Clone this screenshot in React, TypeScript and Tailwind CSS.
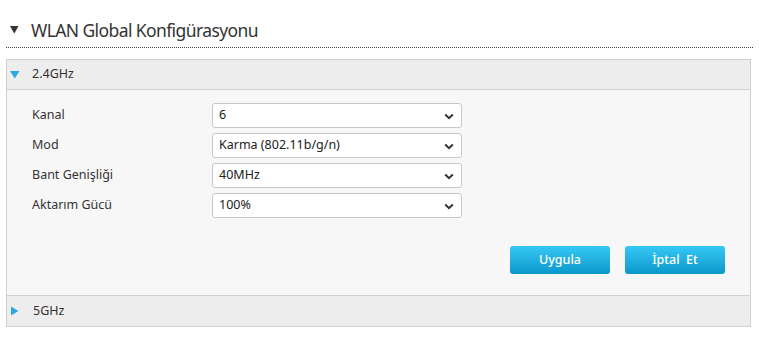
import React from "react";

const font = { fontFamily: '"Noto Sans", "Open Sans", Arial, sans-serif' };

function Chevron() {
  return (
    <svg width="10" height="7" viewBox="0 0 10 7" className="absolute right-[7px] top-[9px]">
      <path d="M1.2 1.5 L5 5.2 L8.8 1.5" fill="none" stroke="#333" strokeWidth="2" />
    </svg>
  );
}

function Row({ label, value }: { label: string; value: string }) {
  return (
    <div className="flex items-center h-[25px]">
      <div className="w-[180px] text-[12.5px] text-[#333]">{label}</div>
      <div className="relative w-[250px] h-[25px] bg-white border border-[#c8c8c8] rounded-[3px] flex items-center pl-[6px] text-[12.5px] text-[#222]">
        {value}
        <Chevron />
      </div>
    </div>
  );
}

export default function App() {
  return (
    <div className="w-[759px] h-[338px] bg-white" style={font}>
      <div className="px-[6px]">
        <div className="h-[48px] border-b border-dotted border-[#444] flex items-start pt-[19px]">
          <svg width="9" height="8" viewBox="0 0 9 8" className="ml-[4px] mt-[7px]">
            <path d="M0 0 H8.5 L4.25 7.5 Z" fill="#333" />
          </svg>
          <span className="ml-[12px] text-[17.5px] leading-[22px] tracking-[-0.6px] text-[#333]">WLAN Global Konfigürasyonu</span>
        </div>
        <div className="mt-[11px] w-[745px] border border-[#d0d0d0]">
          <div className="h-[30px] bg-[#ededed] border-b border-[#d0d0d0] flex items-center">
            <svg width="10" height="8" viewBox="0 0 10 8" className="ml-[3px] mt-[1px]">
              <path d="M0 0 H9.5 L4.75 7.5 Z" fill="#29abe2" />
            </svg>
            <span className="ml-[12px] text-[12.5px] text-[#333]">2.4GHz</span>
          </div>
          <div className="bg-[#f7f7f7] border-b border-[#d0d0d0] pt-[13px] pb-[21px] pl-[25px] pr-[25px]">
            <div className="flex flex-col gap-[5px]">
              <Row label="Kanal" value="6" />
              <Row label="Mod" value="Karma (802.11b/g/n)" />
              <Row label="Bant Genişliği" value="40MHz" />
              <Row label="Aktarım Gücü" value="100%" />
            </div>
            <div className="flex justify-end gap-[15px] mt-[28px]">
              <button className="w-[100px] h-[28px] rounded-[3px] bg-gradient-to-b from-[#34c8f5] to-[#0798cc] text-white text-[12.5px] font-medium">
                Uygula
              </button>
              <button className="w-[100px] h-[28px] rounded-[3px] bg-gradient-to-b from-[#34c8f5] to-[#0798cc] text-white text-[12.5px] font-medium whitespace-pre">
                İptal  Et
              </button>
            </div>
          </div>
          <div className="h-[30px] bg-[#ededed] flex items-center">
            <svg width="8" height="10" viewBox="0 0 8 10" className="ml-[4px]">
              <path d="M0 0.5 L7.5 5 L0 9.5 Z" fill="#29abe2" />
            </svg>
            <span className="ml-[14px] text-[12.5px] text-[#333]">5GHz</span>
          </div>
        </div>
      </div>
    </div>
  );
}
